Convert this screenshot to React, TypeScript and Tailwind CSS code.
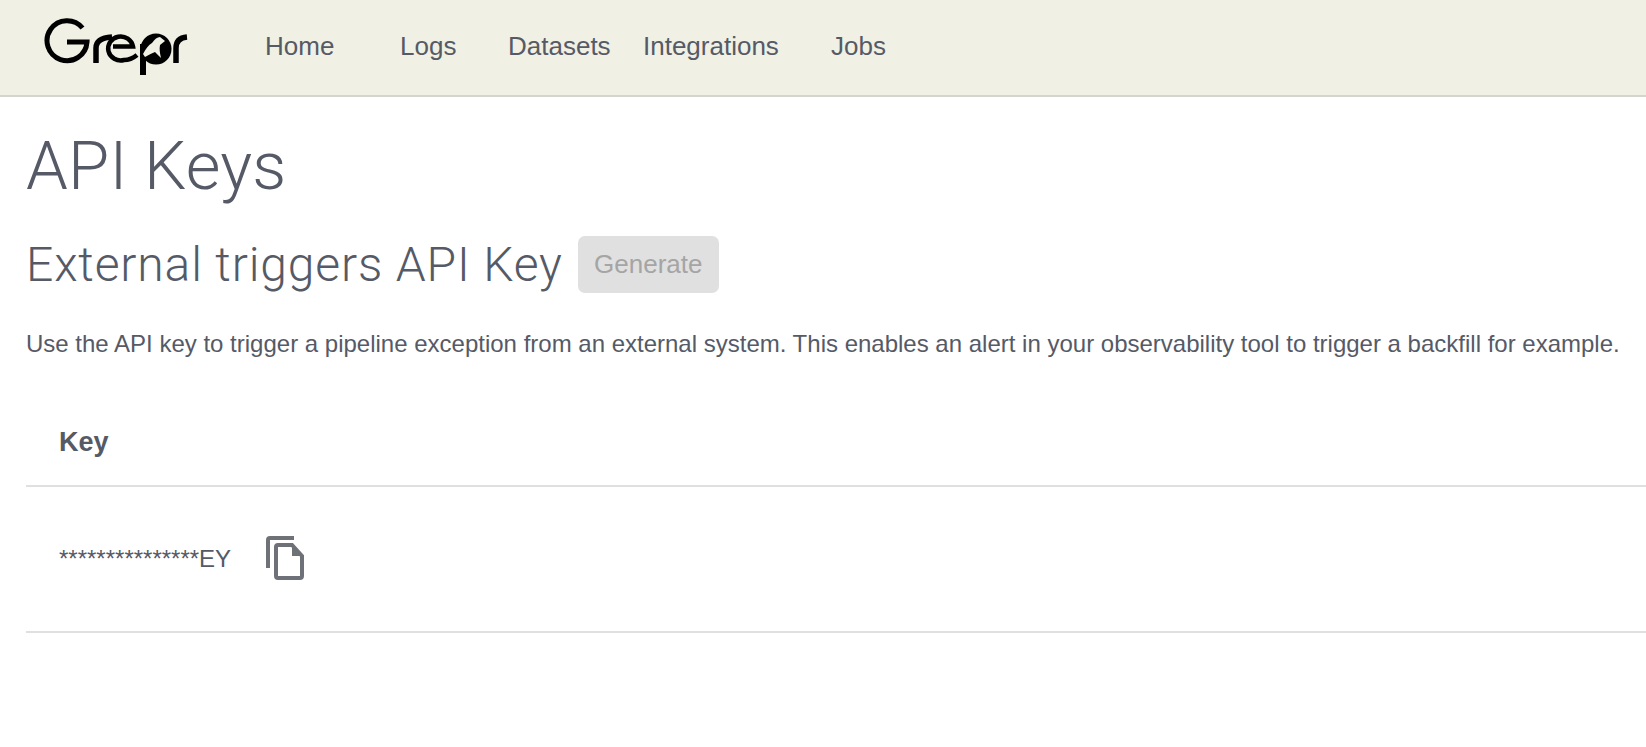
const Logo = () => (
  <svg width="146" height="62" viewBox="43 15 146 62" className="block -mt-[3px]" fill="none" stroke="#000">
    <path d="M82.5 28 A20 20 0 1 0 87 42 H67" strokeWidth="5" />
    <path d="M96 63 V48 Q96 38 112 37" strokeWidth="5.5" />
    <path d="M113 46.5 H133 A12.5 12 0 1 0 124 60 Q131 60 137 55" strokeWidth="4.5" />
    <circle cx="156" cy="49" r="15.5" fill="#000" stroke="none" />
    <path d="M143 44 V75" strokeWidth="6" />
    <path d="M176 63 V48 Q176 38 187 37" strokeWidth="5.5" />
    <path d="M143 54 Q147 46 152 43 Q156 37 160 37 L165 41 L160 45 Q159 50 161 58 L155 52 Q150 54 145 57 Z" fill="#f0f0e4" stroke="none" />
  </svg>
);

const Copy = () => (
  <svg width="38" height="44" viewBox="0 0 38 44" fill="none" stroke="#6f7179" strokeWidth="4" className="block -mt-[2px]">
    <path d="M2 32 V4 Q2 2 4 2 H28" />
    <path d="M10 11 Q10 9 12 9 H26 L36 20 V40 Q36 42 34 42 H12 Q10 42 10 40 Z" />
    <path d="M26 9 L36 20 H26 Z" fill="#6f7179" stroke="none" />
  </svg>
);

export default function App() {
  return (
    <div className="min-h-[747px] bg-white text-[#555a66] font-['Liberation_Sans',Arial,sans-serif]">
      <header className="h-[97px] bg-[#f0f0e4] border-b-2 border-[#d5d5d0] flex items-center pl-[43px]">
        <Logo />
        <nav className="flex text-[26px] ml-[76px] -mt-[2px]">
          <a className="w-[135px]">Home</a>
          <a className="w-[108px]">Logs</a>
          <a className="w-[135px]">Datasets</a>
          <a className="w-[188px]">Integrations</a>
          <a>Jobs</a>
        </nav>
      </header>
      <main className="pl-[26px]">
        <h1 className="mt-[33px] text-[67px] leading-[72px] font-light font-['Roboto',sans-serif] tracking-[0.2px]">API Keys</h1>
        <div className="mt-[33px] flex items-center gap-[15px]">
          <h2 className="text-[48px] leading-[58px] pt-[1px] font-light font-['Roboto',sans-serif] tracking-[0.85px]">External triggers API Key</h2>
          <button className="h-[57px] w-[141px] rounded-[7px] bg-[#e0e0e0] text-[#a5a5a5] text-[26px]">Generate</button>
        </div>
        <p className="mt-[34px] text-[24px] leading-[32px] whitespace-nowrap">Use the API key to trigger a pipeline exception from an external system. This enables an alert in your observability tool to trigger a backfill for example.</p>
        <div className="mt-[39px] border-b-2 border-[#dfe0e2] h-[88px] pl-[33px] flex items-center font-bold text-[27px]">Key</div>
        <div className="border-b-2 border-[#dfe0e2] h-[146px] pl-[33px] flex items-center text-[24px]">
          <span className="w-[207px]">***************EY</span>
          <Copy />
        </div>
      </main>
    </div>
  );
}
